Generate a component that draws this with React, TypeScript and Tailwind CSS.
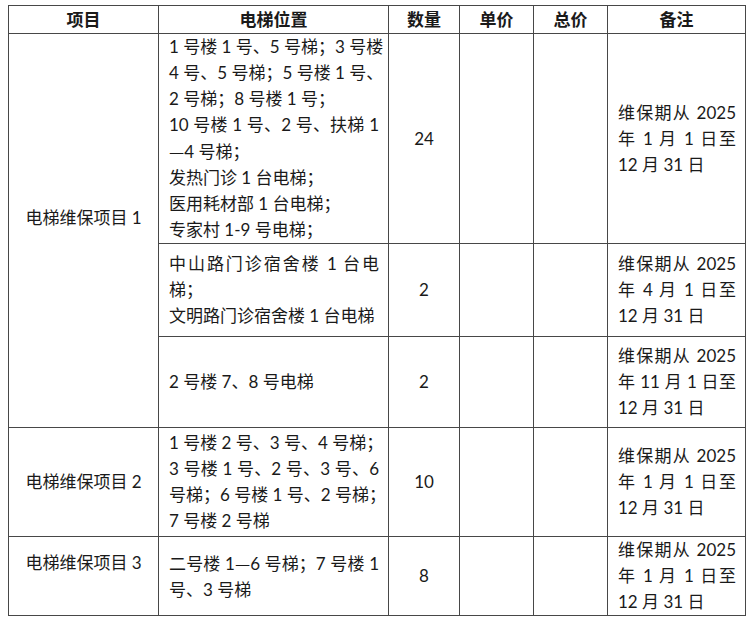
import React from "react";

type Line = { t: string; j?: boolean };

const cell = "border border-[#474747] align-middle";

// em dash should come from the CJK font so it is full width
function withDash(t: string) {
    const parts = t.split("—");
    return parts.map((p, i) => (
        <React.Fragment key={i}>
            {i > 0 && <span className="font-['Noto_Sans_CJK_SC',sans-serif]">—</span>}
            {p}
        </React.Fragment>
    ));
}

function Lines({ lines }: { lines: Line[] }) {
    return (
        <div>
            {lines.map((l, i) => (
                <span
                    key={i}
                    className={l.j ? "block whitespace-pre text-justify [text-align-last:justify]" : "block whitespace-pre text-left"}
                >
                    {withDash(l.t)}
                </span>
            ))}
        </div>
    );
}

function Remark({ month }: { month: string }) {
    return (
        <Lines
            lines={[
                { t: "维保期从 2025", j: true },
                { t: `年 ${month} 月 1 日至`, j: true },
                { t: "12 月 31 日" },
            ]}
        />
    );
}

export default function App() {
    return (
        <div className="w-[750px] h-[621px] bg-white pt-[5px] pl-[8px] font-['Lato','Noto_Sans_CJK_SC',sans-serif] text-[17px] leading-[26px] text-[#1a1a1a]">
            <table className="table-fixed border-collapse w-[737px]">
                <colgroup>
                    <col className="w-[150px]" />
                    <col className="w-[230px]" />
                    <col className="w-[71px]" />
                    <col className="w-[74px]" />
                    <col className="w-[74px]" />
                    <col className="w-[138px]" />
                </colgroup>
                <thead>
                    <tr className="h-[28px] text-center">
                        <th className={cell + " font-bold leading-[24px]"}>项目</th>
                        <th className={cell + " font-bold leading-[24px]"}>电梯位置</th>
                        <th className={cell + " font-bold leading-[24px]"}>数量</th>
                        <th className={cell + " font-bold leading-[24px]"}>单价</th>
                        <th className={cell + " font-bold leading-[24px]"}>总价</th>
                        <th className={cell + " font-bold leading-[24px]"}>备注</th>
                    </tr>
                </thead>
                <tbody>
                    <tr className="h-[210px]">
                        <td rowSpan={3} className={cell + " text-center pb-[26px]"}>电梯维保项目 1</td>
                        <td className={cell + " pl-[10px] pr-[9px]"}>
                            <Lines
                                lines={[
                                    { t: "1 号楼 1 号、5 号梯；3 号楼", j: true },
                                    { t: "4 号、5 号梯；5 号楼 1 号、", j: true },
                                    { t: "2 号梯；8 号楼 1 号；" },
                                    { t: "10 号楼 1 号、2 号、扶梯 1", j: true },
                                    { t: "—4 号梯；" },
                                    { t: "发热门诊 1 台电梯；" },
                                    { t: "医用耗材部 1 台电梯；" },
                                    { t: "专家村 1-9 号电梯；" },
                                ]}
                            />
                        </td>
                        <td className={cell + " text-center"}>24</td>
                        <td className={cell} />
                        <td className={cell} />
                        <td className={cell + " pl-[10px] pr-[9px]"}>
                            <Remark month="1" />
                        </td>
                    </tr>
                    <tr className="h-[93px]">
                        <td className={cell + " pl-[10px] pr-[9px]"}>
                            <Lines
                                lines={[
                                    { t: "中山路门诊宿舍楼 1 台电", j: true },
                                    { t: "梯；" },
                                    { t: "文明路门诊宿舍楼 1 台电梯" },
                                ]}
                            />
                        </td>
                        <td className={cell + " text-center"}>2</td>
                        <td className={cell} />
                        <td className={cell} />
                        <td className={cell + " pl-[10px] pr-[9px]"}>
                            <Remark month="4" />
                        </td>
                    </tr>
                    <tr className="h-[91px]">
                        <td className={cell + " pl-[10px] pr-[9px]"}>2 号楼 7、8 号电梯</td>
                        <td className={cell + " text-center"}>2</td>
                        <td className={cell} />
                        <td className={cell} />
                        <td className={cell + " pl-[10px] pr-[9px]"}>
                            <Remark month="11" />
                        </td>
                    </tr>
                    <tr className="h-[109px]">
                        <td className={cell + " text-center"}>电梯维保项目 2</td>
                        <td className={cell + " pl-[10px] pr-[9px]"}>
                            <Lines
                                lines={[
                                    { t: "1 号楼 2 号、3 号、4 号梯；", j: true },
                                    { t: "3 号楼 1 号、2 号、3 号、6", j: true },
                                    { t: "号梯；6 号楼 1 号、2 号梯；", j: true },
                                    { t: "7 号楼 2 号梯" },
                                ]}
                            />
                        </td>
                        <td className={cell + " text-center"}>10</td>
                        <td className={cell} />
                        <td className={cell} />
                        <td className={cell + " pl-[10px] pr-[9px]"}>
                            <Remark month="1" />
                        </td>
                    </tr>
                    <tr className="h-[78px]">
                        <td className={cell + " text-center pb-[26px]"}>电梯维保项目 3</td>
                        <td className={cell + " pl-[10px] pr-[9px]"}>
                            <Lines
                                lines={[
                                    { t: "二号楼 1—6 号梯；7 号楼 1", j: true },
                                    { t: "号、3 号梯" },
                                ]}
                            />
                        </td>
                        <td className={cell + " text-center"}>8</td>
                        <td className={cell} />
                        <td className={cell} />
                        <td className={cell + " pl-[10px] pr-[9px]"}>
                            <Remark month="1" />
                        </td>
                    </tr>
                </tbody>
            </table>
        </div>
    );
}
